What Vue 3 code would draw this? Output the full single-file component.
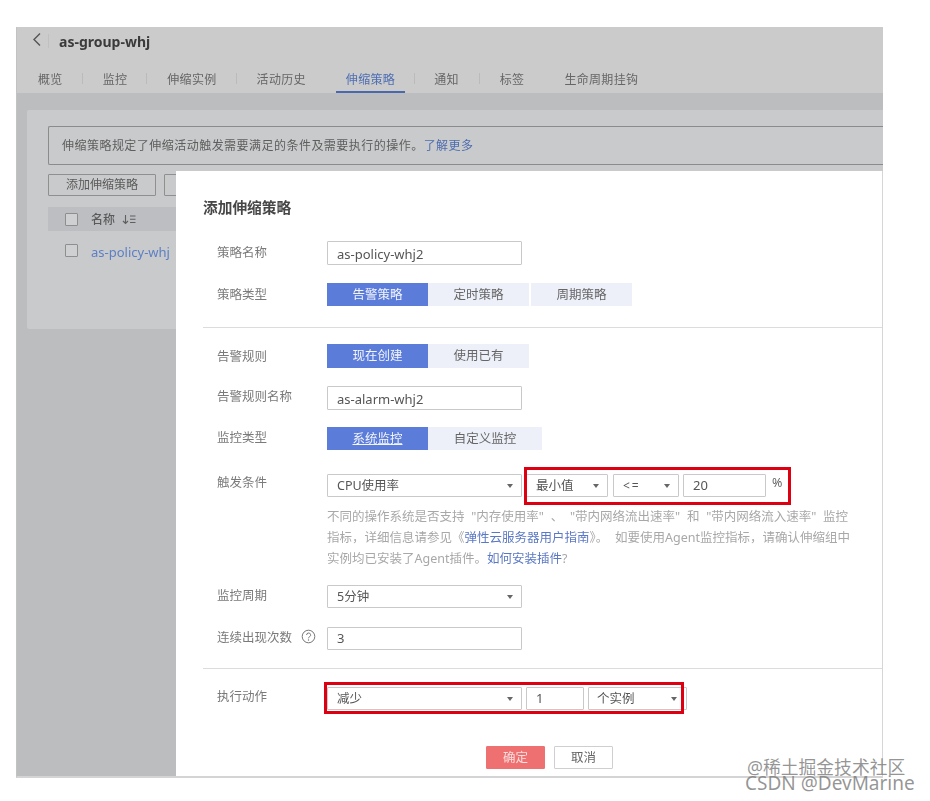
<script setup>
const tabs = ['概览', '监控', '伸缩实例', '活动历史', '伸缩策略', '通知', '标签', '生命周期挂钩']
const activeTab = '伸缩策略'
</script>

<template>
  <div class="page">
    <div class="shot">
      <header class="head">
        <div class="title-row">
          <svg class="back" width="10" height="15" viewBox="0 0 10 15"><path d="M8 1.5 2 7.5l6 6" fill="none" stroke="#555" stroke-width="1.4"/></svg>
          <span class="vbar"></span>
          <span class="group-name">as-group-whj</span>
        </div>
        <nav class="tabs">
          <span v-for="t in tabs" :key="t" class="tab" :class="{ on: t === activeTab }">{{ t }}</span>
        </nav>
      </header>
      <section class="card">
        <div class="notice">伸缩策略规定了伸缩活动触发需要满足的条件及需要执行的操作。<a class="more">了解更多</a></div>
        <div class="tools">
          <span class="tool">添加伸缩策略</span>
          <span class="tool second"></span>
        </div>
        <div class="thead">
          <span class="check"></span>
          <b>名称</b>
          <svg width="14" height="11" viewBox="0 0 14 11"><path d="M3.5 1v8.5M1 7l2.500 2.500L6 7M8 2h5.500M8 5.200h5.500M8 8.500h5.500" fill="none" stroke="#5f5f5f" stroke-width="1.100"/></svg>
        </div>
        <div class="trow">
          <span class="check"></span>
          <a class="policy">as-policy-whj</a>
        </div>
      </section>

      <section class="modal">
        <h2>添加伸缩策略</h2>
        <div class="row r-name">
          <label>策略名称</label>
          <div class="field wide latin">as-policy-whj2</div>
        </div>
        <div class="row r-type">
          <label>策略类型</label>
          <div class="seg">
            <span class="on">告警策略</span><span>定时策略</span><span class="apart">周期策略</span>
          </div>
        </div>
        <hr class="rule first" />
        <div class="row r-alarm">
          <label>告警规则</label>
          <div class="seg"><span class="on">现在创建</span><span>使用已有</span></div>
        </div>
        <div class="row r-alarm-name">
          <label>告警规则名称</label>
          <div class="field wide latin">as-alarm-whj2</div>
        </div>
        <div class="row r-kind">
          <label>监控类型</label>
          <div class="seg"><span class="on under">系统监控</span><span class="long">自定义监控</span></div>
        </div>
        <div class="row r-trigger">
          <label>触发条件</label>
          <div class="controls">
            <div class="field wide select">CPU使用率</div>
            <div class="field min select">最小值</div>
            <div class="field op select">&lt;=</div>
            <div class="field num latin">20</div>
            <span class="unit">%</span>
            <span class="red red-a"></span>
          </div>
        </div>
        <p class="help">
          不同的操作系统是否支持 "内存使用率" 、 "带内网络流出速率" 和 "带内网络流入速率" 监控<br />
          指标，详细信息请参见《<a>弹性云服务器用户指南</a>》。 如要使用Agent监控指标，请确认伸缩组中<br />
          实例均已安装了Agent插件。<a>如何安装插件</a>?
        </p>
        <div class="row r-period">
          <label>监控周期</label>
          <div class="field wide select">5分钟</div>
        </div>
        <div class="row r-count">
          <label>连续出现次数
            <svg class="q" width="15" height="15" viewBox="0 0 15 15"><circle cx="7.5" cy="7.500" r="6.300" fill="none" stroke="#777" stroke-width="1"/><path d="M5.600 6a2 2 0 1 1 3 1.700c-.7.4-1.100.8-1.100 1.600" fill="none" stroke="#777" stroke-width="1"/><circle cx="7.500" cy="11" r=".7" fill="#777"/></svg>
          </label>
          <div class="field wide latin">3</div>
        </div>
        <hr class="rule second" />
        <div class="row r-action">
          <label>执行动作</label>
          <div class="controls">
            <div class="field wide select">减少</div>
            <div class="field count latin">1</div>
            <div class="field inst select">个实例</div>
            <span class="red red-b"></span>
          </div>
        </div>
        <div class="actions">
          <span class="btn ok">确定</span>
          <span class="btn">取消</span>
        </div>
      </section>
    </div>
    <div class="mark">
      <span>@稀土掘金技术社区</span>
      <span class="csdn">CSDN @DevMarine</span>
    </div>
  </div>
</template>

<style scoped>
.page {
  position: relative;
  width: 930px;
  height: 801px;
  overflow: hidden;
  background: #fff;
  font-family: "Noto Sans", "Noto Sans CJK SC", sans-serif;
  font-size: 12px;
}
.shot {
  position: relative;
  box-sizing: border-box;
  width: 867px;
  height: 751px;
  margin: 27px 0 0 16px;
  overflow: hidden;
  background: #bcbdbf;
  border-left: 1px solid #c2c2c2;
  border-bottom: 2px solid #d4d4d4;
  filter: blur(0.55px);
}
.head {
  height: 66px;
  background: #cbcbcb;
  box-sizing: border-box;
}
.title-row {
  display: flex;
  align-items: center;
  height: 28px;
  padding-left: 15px;
}
.back { margin-top: -3px; }
.vbar {
  width: 1px;
  height: 14px;
  margin-left: 6px;
  background: #c0c0c0;
}
.group-name {
  margin-left: 10px;
  font-size: 14px;
  font-weight: 700;
  color: #3b3b3b;
  margin-top: 1px;
}
.tabs {
  display: flex;
  height: 38px;
  padding-left: 1px;
}
.tab {
  position: relative;
  padding: 16px 20px 0;
  line-height: 17px;
  letter-spacing: 0.32px;
  color: #666;
}
.tab:not(:last-child)::before {
  content: "";
  position: absolute;
  right: 0;
  top: 18px;
  width: 1px;
  height: 11px;
  background: #bbb;
}
.tab:nth-child(4)::before { display: none; }
.tab:nth-child(5) { padding-right: 19px; }
.tab:nth-child(5)::before { right: -1px; }
.tab:nth-child(6) { padding-right: 21px; }
.tab:nth-child(7)::before { display: none; }
.tab.on { color: #4f6fb4; }
.tab.on::after {
  content: "";
  position: absolute;
  left: 10px;
  right: 9px;
  bottom: 0;
  height: 2px;
  background: #4a68ad;
}
.card {
  box-sizing: border-box;
  height: 219px;
  margin: 17px 0 0 10px;
  padding: 16px 0 0 21px;
  background: #c9cacb;
  border-radius: 2px 0 0 2px;
}
.notice {
  box-sizing: border-box;
  height: 39px;
  padding-left: 13px;
  line-height: 37px;
  color: #5e5e5e;
  letter-spacing: 0.47px;
  border: 1px solid #8b8b8b;
  border-right: 0;
  border-radius: 2px 0 0 2px;
}
.more { color: #4e6cb0; }
.tools {
  display: flex;
  gap: 8px;
  margin-top: 9px;
}
.tool {
  box-sizing: border-box;
  width: 108px;
  height: 22px;
  line-height: 20px;
  text-align: center;
  color: #5b5b5b;
  border: 1px solid #8f8f8f;
  border-radius: 1px;
}
.tool.second { width: 40px; }
.thead,
.trow {
  display: flex;
  align-items: center;
  margin-left: 0;
  padding-left: 17px;
}
.thead {
  gap: 0;
  height: 24px;
  margin-top: 11px;
  background: #bcbec2;
  color: #5a5a5a;
}
.thead b {
  margin-left: 13px;
  margin-right: 7px;
  font-weight: 500;
}
.trow { height: 41px; margin-top: -1px; }
.check {
  box-sizing: border-box;
  width: 13px;
  height: 13px;
  border: 1px solid #8e8e8e;
  border-radius: 1px;
  background: #cfd0d1;
}
.policy {
  margin-left: 13px;
  margin-top: 3px;
  font-size: 13px;
  color: #5c7fc5;
}
.modal {
  position: absolute;
  top: 144px;
  left: 159px;
  right: 0;
  bottom: 0;
  box-sizing: border-box;
  background: #fff;
  border-right: 1px solid #d6d6d6;
  color: #555;
  font-size: 12.5px;
}
.modal h2 {
  margin: 0;
  padding: 27px 0 0 27px;
  font-size: 14.7px;
  line-height: 18px;
  font-weight: 700;
  color: #474747;
}
.row {
  display: flex;
  align-items: flex-start;
  padding-left: 41px;
}
.row label {
  position: relative;
  flex: 0 0 110px;
  line-height: 23px;
  color: #7a7a7a;
}
.r-name { margin-top: 25px; }
.r-type { margin-top: 18px; }
.r-alarm { margin-top: 16px; }
.r-alarm label { line-height: 25px; }
.r-alarm-name { margin-top: 17px; }
.r-alarm-name label,
.r-kind label { line-height: 21px; }
.r-kind { margin-top: 17px; }
.r-trigger { margin-top: 24px; }
.r-trigger label { line-height: 17px; }
.r-period { margin-top: 16px; }
.r-period label,
.r-count label { line-height: 21px; }
.r-count { margin-top: 19px; }
.r-action { margin-top: 18px; }
.r-action label { line-height: 19px; }
.field {
  position: relative;
  box-sizing: border-box;
  height: 23px;
  padding-left: 9px;
  line-height: 22px;
  font-size: 12.500px;
  color: #555;
  background: #fff;
  border: 1px solid #c9c9c9;
  border-radius: 1px;
  flex: none;
}
.field.latin { font-size: 13px; line-height: 20px; }
.wide { width: 195px; }
.r-name .field.latin,
.r-alarm-name .field.latin { height: 24px; line-height: 25px; }
.select::after {
  content: "";
  position: absolute;
  right: 8px;
  top: 9px;
  border-left: 3px solid transparent;
  border-right: 3px solid transparent;
  border-top: 4px solid #666;
}
.seg {
  display: flex;
  height: 23px;
  line-height: 23px;
  text-align: center;
  color: #666;
}
.seg span {
  width: 101px;
  background: #edf0f9;
}
.seg .on {
  background: #5b7cd9;
  color: #f3f5fc;
}
.seg .apart { margin-left: 2px; }
.seg .long { width: 114px; }
.under { text-decoration: underline; }
.r-alarm .seg { height: 24px; line-height: 24px; }
.controls {
  position: relative;
  display: flex;
}
.min { width: 82px; margin-left: 4px; }
.op { width: 66px; margin-left: 5px; letter-spacing: 2px; font-size: 12px; }
.num { width: 83px; margin-left: 4px; }
.unit {
  margin-left: 6px;
  line-height: 17px;
  font-size: 12.500px;
  color: #666;
}
.red {
  position: absolute;
  box-sizing: border-box;
  border: 3px solid #dd0010;
  pointer-events: none;
}
.red-a { left: 197px; top: -7px; width: 267px; height: 38px; }
.red-b { left: -3px; top: -5px; width: 360px; height: 32px; }
.count { width: 58px; margin-left: 4px; }
.inst { width: 99px; margin-left: 4px; padding-left: 8px; }
.inst::after { right: 9px; }
.help {
  margin: 9px 0 0 151px;
  font-size: 12.5px;
  line-height: 21px;
  word-spacing: 3.5px;
  color: #a8a8a8;
  white-space: nowrap;
}
.help a { color: #5a78c4; }
.q {
  position: absolute;
  left: 84px;
  top: 2px;
}
.rule {
  height: 0;
  margin: 0 0 0 27px;
  border: 0;
  border-top: 1px solid #dcdcdc;
}
.rule.first { margin-top: 21px; }
.rule.second { margin-top: 18px; }
.actions {
  display: flex;
  gap: 9px;
  margin-top: 36px;
  padding-left: 310px;
}
.btn {
  box-sizing: border-box;
  width: 59px;
  height: 23px;
  line-height: 21px;
  text-align: center;
  color: #666;
  border: 1px solid #cfcfcf;
  border-radius: 1px;
}
.btn.ok {
  background: #ee7070;
  border-color: #ee7070;
  color: #fbdede;
}
.mark {
  position: absolute;
  left: 745px;
  top: 757px;
  display: flex;
  flex-direction: column;
  font-size: 19px;
  line-height: 20px;
  color: rgba(120, 120, 120, 0.78);
  white-space: nowrap;
}
.mark span:first-child { padding-left: 2px; font-size: 17.800px; }
.csdn { margin-top: -4px; }
</style>
